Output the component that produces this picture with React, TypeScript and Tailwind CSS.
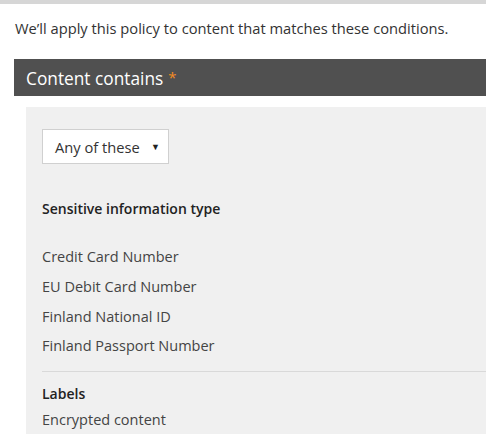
const TYPES = [
  'Credit Card Number',
  'EU Debit Card Number',
  'Finland National ID',
  'Finland Passport Number',
];

export default function App() {
  return (
    <div className="w-[486px] h-[434px] overflow-hidden bg-white text-[#333] font-['Segoe_UI','Open_Sans',sans-serif]">
      <div className="h-[4px] bg-[#d6d6d6]" />

      <p className="ml-[15px] mt-[14px] text-[14.7px] leading-[20px] text-[#333]">
        We’ll apply this policy to content that matches these conditions.
      </p>

      {/* Section header */}
      <div className="ml-[14px] mt-[21px] h-[37px] bg-[#505050] flex items-center pl-[12px]">
        <span className="text-white text-[17.3px] leading-[24px] translate-y-[1px]">Content contains</span>
        <span className="ml-[5px] text-[#f38b24] text-[15px]">*</span>
      </div>

      {/* Condition panel */}
      <div className="ml-[26px] mt-[11px] bg-[#f0f0f0] pl-[16px] pt-[22px] pb-[20px]">
        <div className="w-[127px] h-[35px] bg-white border border-[#d0d0d0] flex items-center justify-between pl-[12px] pr-[8px]">
          <span className="text-[14.7px] text-[#333] translate-y-[1px]">Any of these</span>
          <span className="text-[9px] text-[#222]">▼</span>
        </div>

        <div className="mt-[34px] text-[14px] font-semibold text-[#222]">Sensitive information type</div>

        <ul className="mt-[28px] flex flex-col gap-[10px] text-[14.5px] text-[#444]">
          {TYPES.map((t, i) => (
            <li key={t} className={i === 3 ? 'leading-[20px] -mt-[1px]' : 'leading-[20px]'}>{t}</li>
          ))}
        </ul>

        <div className="mt-[15px] border-t border-[#d9d9d9]" />

        <div className="mt-[12px] text-[14px] font-semibold text-[#222] leading-[20px]">Labels</div>
        <div className="mt-[6px] text-[14.5px] text-[#444] leading-[20px]">Encrypted content</div>
      </div>
    </div>
  );
}
